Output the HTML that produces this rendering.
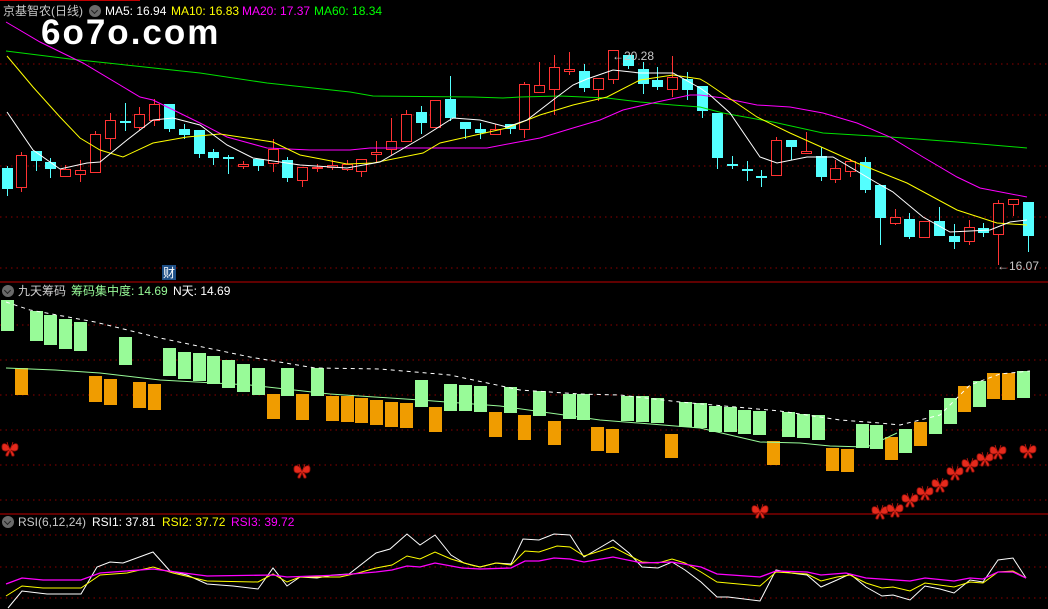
<!DOCTYPE html>
<html><head><meta charset="utf-8"><style>
html,body{margin:0;padding:0;background:#000;width:1048px;height:609px;overflow:hidden}
body{position:relative;font-family:"Liberation Sans","Noto Sans CJK SC",sans-serif}
svg{position:absolute;left:0;top:0}
.t{position:absolute;font-size:12px;white-space:nowrap;line-height:14px}
.ic{position:absolute;width:12px;height:12px;border-radius:50%;background:#6a6a6a}
.ic:after{content:"";position:absolute;left:3px;top:3px;width:4px;height:4px;border-right:1.5px solid #222;border-bottom:1.5px solid #222;transform:rotate(45deg)}
</style></head><body>
<svg id="s" width="1048" height="609" xmlns="http://www.w3.org/2000/svg">
<defs>
<g id="bf"><path d="M0,0 C-3,-7 -9,-7 -8,-1 C-8,2 -4,3 -1,1 C-4,4 -6,8 -2,7 L0,2 L2,7 C6,8 4,4 1,1 C4,3 8,2 8,-1 C9,-7 3,-7 0,0Z" fill="#e52a1c" stroke="#8a0d08" stroke-width="0.8"/><path d="M-1,-1 L-3,-7 M1,-1 L3,-7" stroke="#c01a10" stroke-width="0.8"/></g>
</defs>
<g stroke="#8b0000" stroke-dasharray="1.5,4" stroke-width="1">
<line x1="0" y1="64" x2="1048" y2="64"/><line x1="0" y1="115" x2="1048" y2="115"/><line x1="0" y1="166" x2="1048" y2="166"/><line x1="0" y1="217" x2="1048" y2="217"/><line x1="0" y1="268" x2="1048" y2="268"/>
<line x1="0" y1="325" x2="1048" y2="325"/><line x1="0" y1="360" x2="1048" y2="360"/><line x1="0" y1="395" x2="1048" y2="395"/><line x1="0" y1="430" x2="1048" y2="430"/><line x1="0" y1="465" x2="1048" y2="465"/><line x1="0" y1="500" x2="1048" y2="500"/>
<line x1="0" y1="535" x2="1048" y2="535"/><line x1="0" y1="567" x2="1048" y2="567"/><line x1="0" y1="598" x2="1048" y2="598"/>
</g>
<line x1="0" y1="282" x2="1048" y2="282" stroke="#c00000"/>
<line x1="0" y1="514" x2="1048" y2="514" stroke="#c00000"/>
<line x1="0" y1="0.5" x2="140" y2="0.5" stroke="#c00000"/>
<g id="cand"></g><g id="bars"></g>
<g fill="none" stroke-width="1">
<polyline stroke="#00e000" points="6,51 70,59 117,64 200,73 267,83 350,92 373,96 473,97 503,98 520,97 560,96 607,98 640,102 673,105 700,107 723,113 773,122 823,133 890,137 957,142 1027,148"/>
<polyline stroke="#ff00ff" points="6,22 40,42 83,63 140,97 153,100 200,123 227,137 267,148 310,150 350,150 370,148 487,148 513,143 540,138 573,128 600,120 623,110 657,102 690,95 700,95 723,98 757,105 790,107 823,113 857,123 890,137 923,157 957,177 980,188 1027,197"/>
<polyline stroke="#ffff00" points="7,56 33,87 60,117 80,138 100,150 123,157 153,143 187,137 220,134 273,142 300,155 347,164 373,163 423,153 440,143 507,128 540,115 573,105 607,97 640,80 673,75 700,79 707,83 757,117 790,133 857,163 907,183 957,210 997,223 1027,225"/>
<polyline stroke="#ffffff" points="7,112 33,150 60,169 87,163 100,162 127,140 153,120 173,118 200,125 227,145 253,158 300,165 347,168 380,162 423,137 453,118 480,120 507,127 527,120 553,100 573,85 587,79 613,70 640,73 673,73 700,88 710,95 730,113 760,157 777,163 807,157 833,157 877,183 893,192 923,217 950,232 990,230 1010,222 1027,220"/>
</g>
<g fill="none">
<polyline stroke="#ffffff" stroke-dasharray="4,4" points="6,302 30,310 95,322 160,338 250,357 315,368 380,369 450,375 520,390 580,394 620,395 680,402 780,411 840,420 880,423 900,425 940,415 970,385 1000,374 1030,371"/>
<polyline stroke="#98fb98" points="6,368 55,370 100,373 160,380 250,385 330,394 420,400 500,406 600,420 700,428 760,442 800,443 830,446 867,447 897,433"/>
</g>
<g id="bfs"></g>
<g fill="none" stroke-width="1">
<polyline stroke="#ffffff" points="8,608 22,591 47,594 81,594 97,567 110,562 123,563 153,552 170,571 187,575 207,584 233,586 258,589 273,568 287,586 300,577 317,578 333,575 349,574 376,553 390,549 407,534 420,545 435,535 451,555 464,563 480,567 496,563 511,564 523,539 539,540 554,534 570,535 584,557 613,540 629,553 642,567 658,568 672,562 685,570 701,582 717,597 728,597 760,601 776,570 791,573 807,575 821,587 837,580 850,574 866,587 882,596 893,595 910,600 925,586 940,589 954,593 970,580 983,582 998,560 1013,558 1026,578"/>
<polyline stroke="#ffff00" points="6,596 22,586 43,588 81,588 100,575 127,573 153,567 173,573 207,581 258,582 273,574 287,582 300,577 340,577 358,573 376,568 392,565 407,556 420,559 435,552 451,559 471,565 480,567 496,563 511,565 525,551 539,552 557,546 570,547 584,556 613,547 642,562 658,563 672,559 685,563 701,572 717,582 760,586 776,572 807,574 821,581 837,577 850,575 866,583 882,588 893,587 910,591 925,583 954,587 970,582 983,583 998,572 1013,571 1026,578"/>
<polyline stroke="#ff00ff" stroke-width="1.3" points="6,584 22,578 43,580 81,580 100,573 153,569 207,576 273,575 287,577 340,575 376,572 392,570 407,566 420,567 435,563 462,568 480,569 511,568 525,561 539,561 554,558 570,559 584,562 613,557 642,563 672,562 701,567 717,574 760,577 776,571 807,572 821,575 846,573 866,578 910,581 925,578 954,581 970,578 983,579 998,572 1013,572 1026,578"/>
</g>
<rect x="162" y="265" width="14" height="15" fill="#1e4f86"/>
<text x="163" y="277" font-size="12" fill="#ffffff" font-family="Liberation Sans, Noto Sans CJK SC, sans-serif">财</text>
<text x="612" y="60" font-size="12" fill="#c8c8c8" font-family="Liberation Sans, sans-serif">←20.28</text>
<text x="997" y="270" font-size="12" fill="#c8c8c8" font-family="Liberation Sans, sans-serif">←16.07</text>
</svg>
<div class="t" style="left:3px;top:4px;color:#c8c8c8">京基智农(日线)</div>
<div class="ic" style="left:89px;top:5px"></div>
<div class="t" style="left:105px;top:4px;color:#fff">MA5: 16.94</div>
<div class="t" style="left:171px;top:4px;color:#ffff00">MA10: 16.83</div>
<div class="t" style="left:242px;top:4px;color:#ff00ff">MA20: 17.37</div>
<div class="t" style="left:314px;top:4px;color:#00ff00">MA60: 18.34</div>
<div class="t" style="left:41px;top:13px;color:#fff;font-size:35px;line-height:40px;font-weight:bold;letter-spacing:2px">6o7o.com</div>
<div class="ic" style="left:2px;top:285px"></div>
<div class="t" style="left:18px;top:284px;color:#d0d0d0">九天筹码</div>
<div class="t" style="left:71px;top:284px;color:#98fb98">筹码集中度: 14.69</div>
<div class="t" style="left:173px;top:284px;color:#fff">N天: 14.69</div>
<div class="ic" style="left:2px;top:516px"></div>
<div class="t" style="left:18px;top:515px;color:#c8c8c8">RSI(6,12,24)</div>
<div class="t" style="left:92px;top:515px;color:#fff">RSI1: 37.81</div>
<div class="t" style="left:162px;top:515px;color:#ffff00">RSI2: 37.72</div>
<div class="t" style="left:231px;top:515px;color:#ff00ff">RSI3: 39.72</div>
<script>
var NS="http://www.w3.org/2000/svg";
function el(p,n,a){var e=document.createElementNS(NS,n);for(var k in a)e.setAttribute(k,a[k]);p.appendChild(e);return e;}
var C=[["c",2,168,189,166,196],["r",16,155,187,152,192],["c",31,151,161,151,171],["c",45,162,169,158,178],["r",60,169,176,165,177],["r",75,170,174,160,182],["r",90,134,172,131,172],["r",105,120,138,113,150],["c",120,121,123,103,131],["r",134,114,127,107,130],["r",149,104,120,99,126],["c",164,104,129,104,132],["c",179,129,135,124,139],["c",194,130,154,130,158],["c",208,152,158,149,165],["c",223,157,158,155,174],["r",238,164,166,161,169],["c",253,159,166,159,171],["r",268,149,163,139,172],["c",282,160,178,157,182],["r",297,167,180,167,187],["r",312,167,168,164,172],["r",327,165,167,160,170],["r",342,164,169,160,171],["r",356,159,171,159,177],["r",371,152,154,141,162],["r",386,141,149,118,155],["r",401,114,141,110,141],["c",416,112,123,106,134],["r",430,100,127,100,127],["c",445,99,118,76,121],["c",460,122,129,122,139],["c",475,129,133,123,139],["r",490,129,134,124,134],["c",505,124,129,124,134],["r",519,84,129,82,138],["r",534,85,92,62,92],["r",549,67,89,55,115],["r",564,69,71,52,75],["c",579,71,88,64,92],["r",593,78,89,78,101],["r",608,50,79,50,84],["c",623,55,66,55,69],["c",638,69,84,62,94],["c",652,80,87,67,90],["r",667,77,89,56,97],["c",682,79,90,72,100],["c",697,86,111,86,118],["c",712,113,158,113,169],["c",727,164,166,156,169],["c",742,169,171,161,181],["c",756,176,178,170,187],["r",771,140,175,137,175],["c",786,140,147,140,160],["r",801,151,153,132,153],["c",816,156,177,147,181],["r",830,168,179,160,183],["r",845,161,171,159,177],["c",860,162,190,157,193],["c",875,185,218,185,245],["r",890,217,223,209,225],["c",904,219,237,213,239],["r",919,221,237,221,237],["c",934,221,236,207,236],["c",949,236,242,224,249],["r",964,227,241,220,245],["c",978,228,233,223,237],["r",993,203,234,200,265],["r",1008,199,204,199,216],["c",1023,202,236,202,252]];
var g=document.getElementById("cand");
C.forEach(function(d){var col=d[0]=="r"?"#ff3333":"#54ffff";var x=d[1],cx=x+5.5;
el(g,"line",{x1:cx,y1:d[4],x2:cx,y2:d[2],stroke:col});el(g,"line",{x1:cx,y1:d[3],x2:cx,y2:d[5],stroke:col});
if(d[0]=="r")el(g,"rect",{x:x+0.5,y:d[2]+0.5,width:10,height:Math.max(1,d[3]-d[2]),fill:"#000",stroke:col});
else el(g,"rect",{x:x,y:d[2],width:11,height:Math.max(2,d[3]-d[2]),fill:col});});
var B=[[1,300,331,"g"],[15,368,395,"o"],[30,311,341,"g"],[44,315,345,"g"],[59,319,349,"g"],[74,322,351,"g"],[89,376,402,"o"],[104,379,405,"o"],[119,337,365,"g"],[133,382,408,"o"],[148,384,410,"o"],[163,348,376,"g"],[178,352,379,"g"],[193,353,381,"g"],[207,356,384,"g"],[222,360,388,"g"],[237,364,392,"g"],[252,368,395,"g"],[267,394,419,"o"],[281,368,396,"g"],[296,394,420,"o"],[311,368,396,"g"],[326,396,421,"o"],[341,396,422,"o"],[355,398,423,"o"],[370,400,425,"o"],[385,402,427,"o"],[400,403,428,"o"],[415,380,407,"g"],[429,407,432,"o"],[444,384,411,"g"],[459,385,411,"g"],[474,386,412,"g"],[489,412,437,"o"],[504,387,413,"g"],[518,415,440,"o"],[533,391,416,"g"],[548,421,445,"o"],[563,394,419,"g"],[577,394,420,"g"],[591,427,451,"o"],[606,429,453,"o"],[621,396,421,"g"],[636,396,422,"g"],[651,398,423,"g"],[665,434,458,"o"],[679,402,427,"g"],[694,403,428,"g"],[709,406,432,"g"],[724,407,432,"g"],[738,410,434,"g"],[753,411,435,"g"],[767,441,465,"o"],[782,412,437,"g"],[797,414,438,"g"],[812,415,440,"g"],[826,448,471,"o"],[841,449,472,"o"],[856,424,448,"g"],[870,425,449,"g"],[885,437,460,"o"],[899,429,453,"g"],[914,422,446,"o"],[929,410,434,"g"],[944,398,424,"g"],[958,386,412,"o"],[973,381,407,"g"],[987,373,399,"o"],[1002,373,400,"o"],[1017,371,398,"g"]];
var gb=document.getElementById("bars");
B.forEach(function(d){el(gb,"rect",{x:d[0],y:d[1],width:13,height:d[2]-d[1],fill:d[3]=="g"?"#98fb98":"#f09c00"});});
var F=[[10,449],[302,471],[760,511],[880,512],[895,510],[910,500],[925,493],[940,485],[955,473],[970,465],[985,459],[998,452],[1028,451]];
var gf=document.getElementById("bfs");
F.forEach(function(p){el(gf,"use",{href:"#bf",transform:"translate("+p[0]+","+p[1]+")"});});
</script>
</body></html>
